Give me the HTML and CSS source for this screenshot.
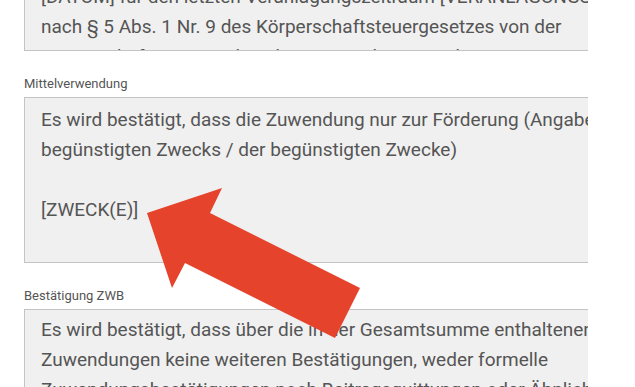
FILE: index.html
```html
<!DOCTYPE html>
<html lang="de">
<head>
    <meta charset="UTF-8">
    <meta name="viewport" content="width=device-width, initial-scale=1.0">
    <title>Zuwendungsbestätigung</title>
    <link rel="stylesheet" href="styles.css">
</head>
<body>
    <div class="form">
        <div class="field field-first">
            <div class="textbox textbox-top">
                <div class="textbox-text scrolled">[DATUM] für den letzten Veranlagungszeitraum [VERANLAGUNGSZEITRAUM]
nach § 5 Abs. 1 Nr. 9 des Körperschaftsteuergesetzes von der
Körperschaftsteuer und nach § 3 Nr. 6 des Gewerbesteuergesetzes von der Gewerbesteuer befreit.</div>
            </div>
        </div>

        <div class="field">
            <label class="field-label">Mittelverwendung</label>
            <div class="textbox textbox-middle">
                <div class="textbox-text">Es wird bestätigt, dass die Zuwendung nur zur Förderung (Angabe des
begünstigten Zwecks / der begünstigten Zwecke)

[ZWECK(E)]

verwendet wird.</div>
            </div>
        </div>

        <div class="field">
            <label class="field-label">Bestätigung ZWB</label>
            <div class="textbox textbox-bottom">
                <div class="textbox-text">Es wird bestätigt, dass über die in der Gesamtsumme enthaltenen
Zuwendungen keine weiteren Bestätigungen, weder formelle
Zuwendungsbestätigungen noch Beitragsquittungen oder Ähnliches ausgestellt wurden und werden.</div>
            </div>
        </div>
    </div>

    <!-- Hinweispfeil -->
    <svg class="arrow" width="635" height="387" viewBox="0 0 635 387">
        <polygon points="147,213 222,188 210,213 360,288 335,338 185,263 172,288" fill="#e5432b"/>
    </svg>
</body>
</html>
```

FILE: styles.css
```css
body {
    font-family: Roboto, "Liberation Sans", sans-serif;
    background-color: #fff;
    color: #555;
    margin: 0;
    padding: 0;
    height: 387px;
    overflow: hidden;
    position: relative;
}

.form {
    display: flex;
    flex-direction: column;
    padding-left: 24px;
    width: 564px;
}

.field {
    display: flex;
    flex-direction: column;
    margin-top: 24px;
}

.field-first {
    margin-top: 0;
}

.field-label {
    font-size: 13px;
    line-height: 18px;
    color: #555;
    margin-bottom: 4px;
}

.textbox {
    background: #f0f0f0;
    border: 1px solid #c4c4c4;
    border-right: none;
    overflow: hidden;
    padding: 7px 0 0 16px;
    box-sizing: border-box;
}

.textbox-text {
    font-size: 19px;
    line-height: 30px;
    white-space: pre;
    color: #555;
}

.textbox-top {
    height: 51px;
    border-top: none;
    padding-top: 0;
}

.scrolled {
    margin-top: -18px;
}

.textbox-middle {
    height: 166px;
}

.textbox-bottom {
    height: 120px;
    padding-top: 5px;
}

.arrow {
    position: absolute;
    left: 0;
    top: 0;
    pointer-events: none;
}
```
